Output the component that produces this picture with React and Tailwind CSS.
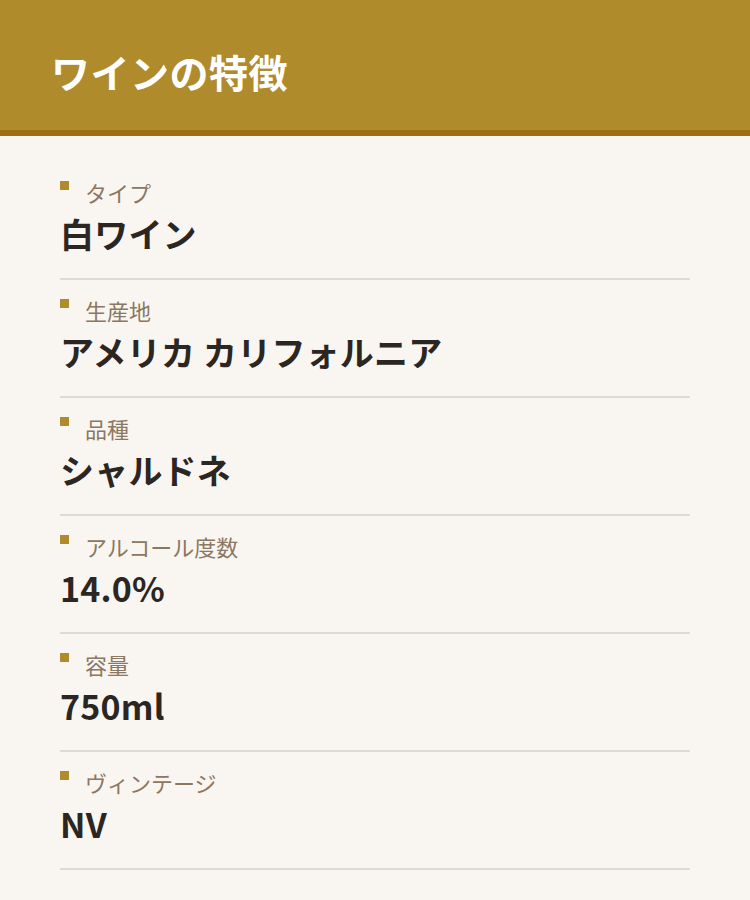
export default function App() {
  const items = [
    { label: "タイプ", value: "白ワイン" },
    { label: "生産地", value: "アメリカ カリフォルニア" },
    { label: "品種", value: "シャルドネ" },
    { label: "アルコール度数", value: "14.0%" },
    { label: "容量", value: "750ml" },
    { label: "ヴィンテージ", value: "NV" },
  ];
  return (
    <div
      className="w-[750px] h-[900px] bg-[#f9f6f1] overflow-hidden"
      style={{ fontFamily: '"Noto Sans CJK JP", "Noto Sans", sans-serif' }}
    >
      <div className="h-[136px] bg-[#b08b2c] border-b-[6px] border-[#9b6f12] flex items-center pl-[51px] pt-[12px]">
        <h1 className="text-[39px] font-bold text-white leading-none tracking-[0.5px]">ワインの特徴</h1>
      </div>
      <div className="px-[60px] pt-[26px]">
        {items.map((it) => (
          <div key={it.label} className="pt-[16px] pb-[22px] border-b-2 border-[#dfdad2]">
            <div className="flex items-start h-[28px]">
              <span className="w-[9px] h-[9px] bg-[#b08b2c] mt-[3px] shrink-0"></span>
              <span className="ml-[16px] text-[22px] leading-[28px] text-[#8c7760]">{it.label}</span>
            </div>
            <div className="mt-[6px] h-[44px] text-[34px] leading-[44px] font-bold text-[#2b2622] tracking-[0.2px]">{it.value}</div>
          </div>
        ))}
      </div>
    </div>
  );
}
